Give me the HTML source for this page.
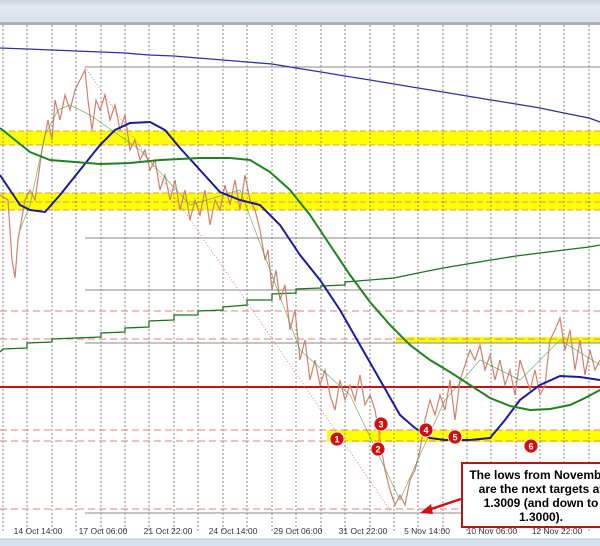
<!DOCTYPE html>
<html><head><meta charset="utf-8"><style>
html,body{margin:0;padding:0;width:600px;height:546px;overflow:hidden;background:#fff}
svg{display:block}
text{font-family:"Liberation Sans",sans-serif}
</style></head><body>
<svg width="600" height="546" viewBox="0 0 600 546" xmlns="http://www.w3.org/2000/svg">
<defs>
<linearGradient id="tb" x1="0" y1="0" x2="0" y2="1"><stop offset="0" stop-color="#c9d3df"/><stop offset="0.3" stop-color="#e4eaf1"/><stop offset="1" stop-color="#d8e0ea"/></linearGradient>
</defs>
<rect x="0" y="0" width="600" height="24" fill="url(#tb)"/>
<rect x="0" y="22" width="600" height="3" fill="#a9b3bf"/>
<rect x="0" y="131" width="600" height="14" fill="#ffff00"/>
<rect x="0" y="193" width="600" height="17" fill="#ffff00"/>
<rect x="327" y="430" width="273" height="12" fill="#ffff00"/>
<rect x="396" y="337" width="204" height="6" fill="#ffff00"/>
<g stroke="#d4a040" stroke-width="1" stroke-dasharray="6,3" fill="none">
<line x1="0" y1="131" x2="600" y2="131"/><line x1="0" y1="145" x2="600" y2="145"/>
<line x1="0" y1="193" x2="600" y2="193"/><line x1="0" y1="202" x2="600" y2="202"/><line x1="0" y1="210" x2="600" y2="210"/>
</g>
<g stroke="#888" stroke-width="1" stroke-dasharray="2,2">
<line x1="3" y1="25" x2="3" y2="533"/><line x1="27" y1="25" x2="27" y2="533"/><line x1="52" y1="25" x2="52" y2="533"/><line x1="76" y1="25" x2="76" y2="533"/><line x1="101" y1="25" x2="101" y2="533"/><line x1="125" y1="25" x2="125" y2="533"/><line x1="149" y1="25" x2="149" y2="533"/><line x1="174" y1="25" x2="174" y2="533"/><line x1="198" y1="25" x2="198" y2="533"/><line x1="223" y1="25" x2="223" y2="533"/><line x1="247" y1="25" x2="247" y2="533"/><line x1="272" y1="25" x2="272" y2="533"/><line x1="296" y1="25" x2="296" y2="533"/><line x1="321" y1="25" x2="321" y2="533"/><line x1="345" y1="25" x2="345" y2="533"/><line x1="370" y1="25" x2="370" y2="533"/><line x1="394" y1="25" x2="394" y2="533"/><line x1="418" y1="25" x2="418" y2="533"/><line x1="443" y1="25" x2="443" y2="533"/><line x1="467" y1="25" x2="467" y2="533"/><line x1="491" y1="25" x2="491" y2="533"/><line x1="516" y1="25" x2="516" y2="533"/><line x1="540" y1="25" x2="540" y2="533"/><line x1="564" y1="25" x2="564" y2="533"/><line x1="589" y1="25" x2="589" y2="533"/>
</g>
<g stroke="#888" stroke-width="1">
<line x1="85" y1="67" x2="600" y2="67"/><line x1="85" y1="238" x2="600" y2="238"/><line x1="85" y1="290" x2="600" y2="290"/><line x1="85" y1="343" x2="600" y2="343"/><line x1="85" y1="513" x2="600" y2="513"/>
</g>
<g stroke="#e08080" stroke-width="1" stroke-dasharray="7,4">
<line x1="0" y1="311" x2="600" y2="311"/><line x1="0" y1="339" x2="600" y2="339"/><line x1="0" y1="430" x2="600" y2="430"/><line x1="0" y1="441" x2="600" y2="441"/><line x1="0" y1="509" x2="600" y2="509"/>
</g>
<line x1="0" y1="387" x2="600" y2="387" stroke="#cc1010" stroke-width="2"/>
<line x1="85" y1="67" x2="390" y2="510" stroke="#e08080" stroke-width="1" stroke-dasharray="1,2"/>
<polyline fill="none" stroke="#3030a0" stroke-width="1.3" points="0,48 27,49 52,50 76,51 101,52 125,53 149,55 174,56 198,58 223,60 247,62 272,64 296,68 321,72 345,76 370,80 394,84 418,88 443,92 467,96 491,100 516,104 540,108 564,113 589,118 600,122"/>
<polyline fill="none" stroke="#207020" stroke-width="1.3" points="0,352 3,349 27,348 27,343 52,342 52,339 76,338 76,338 101,337 101,333 125,332 125,328 149,327 149,321 174,320 174,315 198,315 198,311 223,310 223,307 247,305 247,300 272,300 272,294 296,293 296,289 321,288 321,286 345,285 345,282 370,280 394,278 418,273 443,268 467,264 491,260 516,256 540,253 564,250 589,247 600,245"/>
<polyline fill="none" stroke="#d08070" stroke-width="1.2" points="0,195 8,200 12,260 15,278 18,240 25,200 30,190 35,200 42,150 48,120 52,140 55,100 60,120 65,95 70,110 75,90 80,80 85,70 88,100 92,130 96,100 100,110 105,95 110,120 115,105 120,130 125,115 130,150 135,140 140,160 145,150 150,170 155,160 160,190 165,175 170,200 175,180 180,210 185,190 190,220 195,200 200,215 205,190 210,225 215,200 220,210 225,185 230,205 235,180 240,210 245,175 250,200 255,210 260,230 265,260 268,250 272,290 276,270 280,300 285,285 290,330 295,310 300,360 305,340 310,380 315,360 320,385 325,370 330,395 335,410 340,380 345,400 350,385 355,400 360,375 365,405 370,395 375,410 380,440 385,470 390,490 395,505 400,495 405,505 410,480 415,470 420,450 425,420 430,400 435,415 440,395 445,410 450,380 455,420 460,380 465,365 470,350 475,360 480,345 485,370 490,355 495,380 500,360 505,385 510,370 515,395 520,360 525,375 530,390 535,370 540,395 545,385 550,340 555,330 560,318 565,350 570,330 575,370 580,340 585,375 590,350 595,370 600,360"/>
<polyline fill="none" stroke="#40a040" stroke-width="0.8" opacity="0.7" points="20,230 30,205 45,135 58,110 70,105 90,115 140,150 190,205 240,190 300,350 350,395 400,500 420,455 445,400 480,360 520,380 560,340 600,365"/>
<polyline fill="none" stroke="#1a1aa0" stroke-width="2" points="0,175 10,190 20,205 30,210 45,212 60,195 80,170 100,145 115,130 130,123 150,122 165,130 180,148 200,170 220,192 240,200 260,205 280,225 300,255 320,280 340,310 360,345 380,380 400,415 415,428 430,438 445,440 470,440 490,438 505,420 520,400 540,385 560,376 580,377 600,380"/>
<polyline fill="none" stroke="#208020" stroke-width="2" points="0,128 15,140 30,152 50,160 75,162 100,164 130,163 160,160 200,158 230,158 250,160 270,172 290,190 310,215 330,245 350,275 370,302 390,325 410,345 430,360 450,372 470,385 490,398 510,406 530,410 550,409 570,405 585,398 600,390"/>
<line x1="380" y1="424" x2="379" y2="449" stroke="#f0a000" stroke-width="2"/>
<g fill="#d01010" stroke="#fff" stroke-width="0.8">
<circle cx="337" cy="439" r="7"/><circle cx="378" cy="449" r="7"/><circle cx="381" cy="424" r="7"/><circle cx="426" cy="430" r="7"/><circle cx="455" cy="437" r="7"/><circle cx="531" cy="446" r="7"/>
</g>
<g fill="#fff" font-size="9" font-weight="bold" text-anchor="middle">
<text x="337" y="442.5">1</text><text x="378" y="452.5">2</text><text x="381" y="427.5">3</text><text x="426" y="433.5">4</text><text x="455" y="440.5">5</text><text x="531" y="449.5">6</text>
</g>
<line x1="461" y1="499" x2="428" y2="510" stroke="#d01010" stroke-width="2.5"/>
<polygon points="420,513 431,504 433,514" fill="#d01010"/>
<rect x="462" y="463" width="142" height="64" fill="#fff" stroke="#b01818" stroke-width="2"/>
<g font-size="12" font-weight="bold" fill="#000" text-anchor="middle">
<text x="541" y="479">The lows from November</text>
<text x="541" y="493">are the next targets at</text>
<text x="541" y="507">1.3009 (and down to</text>
<text x="541" y="521">1.3000).</text>
</g>
<g font-size="8.5" fill="#333" text-anchor="middle">
<text x="38" y="534">14 Oct 14:00</text><text x="103" y="534">17 Oct 06:00</text><text x="168" y="534">21 Oct 22:00</text><text x="233" y="534">24 Oct 14:00</text><text x="298" y="534">29 Oct 06:00</text><text x="363" y="534">31 Oct 22:00</text><text x="427" y="534">5 Nov 14:00</text><text x="492" y="534">10 Nov 06:00</text><text x="557" y="534">12 Nov 22:00</text>
</g>
<rect x="0" y="539" width="600" height="7" fill="#d6e2f0"/>
<line x1="0" y1="539" x2="600" y2="539" stroke="#b8c6d6"/>
</svg>
</body></html>
